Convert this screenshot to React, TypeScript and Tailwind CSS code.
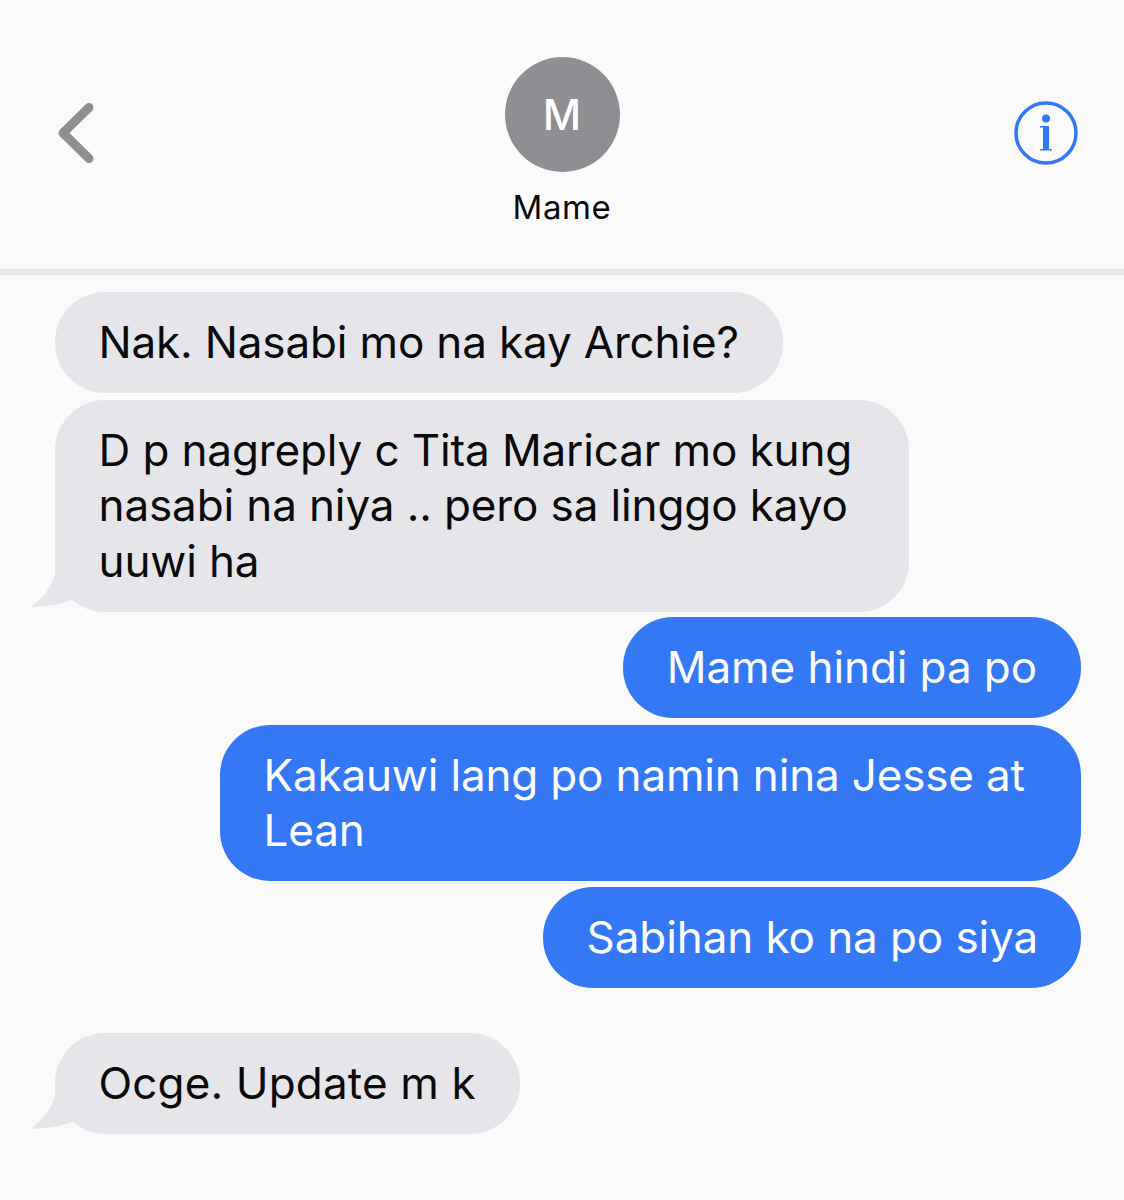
const Tail = () => (
  <svg className="absolute left-[-27px] bottom-[4px] w-[60px] h-[44px]" viewBox="0 0 60 44" fill="#e5e5ea">
    <path d="M27 0 L27 8 C26 20 14 36 2 43 C18 43 34 40 44 36 L60 0 Z" />
  </svg>
);

const Bubble = ({ text, me, tail, className = "w-fit" }: { text: string[]; me?: boolean; tail?: boolean; className?: string }) => (
  <div
    className={
      "relative pl-[43.5px] pr-[44px] rounded-[50px] text-[44px] leading-[55.5px] whitespace-nowrap " +
      className +
      " " +
      (me ? "self-end bg-[#3478f6] text-[#fbfdff]" : "self-start bg-[#e5e5ea] text-[#0a0a0a]")
    }
  >
    {tail && <Tail />}
    <div className="relative">
      {text.map((line, i) => (
        <div key={i}>{line}</div>
      ))}
    </div>
  </div>
);

export default function App() {
  return (
    <div className="min-h-[1200px] bg-[#fafafa] font-['Inter','Liberation_Sans',sans-serif] overflow-hidden">
      <header className="h-[275px] border-b-[6px] border-[#e6e6eb] grid grid-cols-[1fr_auto_1fr] pt-[57px] px-[46px]">
        <div className="pt-[46px] pl-[12px]">
          <svg width="36" height="60" viewBox="0 0 36 60" fill="none" stroke="#8e8e93" strokeWidth="9" strokeLinecap="round" strokeLinejoin="round">
            <path d="M31 4.5 L5 30 L31 55.5" />
          </svg>
        </div>
        <div className="flex flex-col items-center">
          <div className="w-[115px] h-[115px] rounded-full bg-[#8e8e93] flex items-center justify-center text-white text-[42px] font-medium">
            M
          </div>
          <div className="mt-[14px] text-[33px] leading-[42px] tracking-[0.6px] text-[#0a0a0a]">Mame</div>
        </div>
        <div className="flex justify-end pt-[44px]">
          <svg width="64" height="64" viewBox="0 0 64 64" fill="none">
            <circle cx="32" cy="32" r="30" stroke="#3478f6" strokeWidth="3.5" />
            <circle cx="32" cy="17.5" r="4" fill="#3478f6" />
            <path d="M26 25 H35 V48 H38 V49.5 H26 V48 H29 V26.5 H26 Z" fill="#3478f6" />
          </svg>
        </div>
      </header>
      <main className="flex flex-col pt-[17px] pl-[55px] pr-[43px]">
        <Bubble className="w-fit pt-[23px] pb-[22px] tracking-[-0.15px]" text={["Nak. Nasabi mo na kay Archie?"]} />
        <div className="h-[7.5px]" />
        <Bubble tail className="w-[854px] py-[22.5px] tracking-[-0.12px]" text={["D p nagreply c Tita Maricar mo kung", "nasabi na niya .. pero sa linggo kayo", "uuwi ha"]} />
        <div className="h-[5.5px]" />
        <Bubble me className="w-fit pt-[23px] pb-[22px] tracking-[-0.08px]" text={["Mame hindi pa po"]} />
        <div className="h-[7.5px]" />
        <Bubble me className="w-[861px] py-[22.5px] tracking-[-0.16px]" text={["Kakauwi lang po namin nina Jesse at", "Lean"]} />
        <div className="h-[6px]" />
        <Bubble me className="w-[538px] pt-[23px] pb-[22px] tracking-[-0.08px]" text={["Sabihan ko na po siya"]} />
        <div className="h-[45.5px]" />
        <Bubble tail className="w-fit py-[22.5px] tracking-[0.15px]" text={["Ocge. Update m k"]} />
      </main>
    </div>
  );
}
